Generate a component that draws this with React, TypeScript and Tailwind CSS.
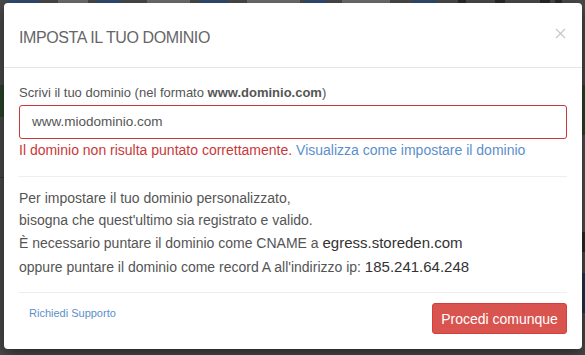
import React from "react";

const font = { fontFamily: '"Liberation Sans", Arial, Helvetica, sans-serif' };

function NavStrip() {
  const items: [number, number, string][] = [
    [7, 32, "bg-[#2f4d73]"],
    [19, 30, "bg-[#6f6f6f]"],
    [9, 23, "bg-[#2f4d73]"],
    [27, 43, "bg-[#6f6f6f]"],
    [10, 28, "bg-[#2f4d73]"],
    [19, 53, "bg-[#6f6f6f]"],
    [5, 21, "bg-[#2f4d73]"],
    [16, 48, "bg-[#6f6f6f]"],
    [22, 25, "bg-[#2f4d73]"],
    [21, 8, "bg-[#2a2a2a]"],
    [29, 10, "bg-[#2a2a2a]"],
    [35, 10, "bg-[#2a2a2a]"],
    [5, 7, "bg-[#2a2a2a]"],
  ];
  return (
    <div className="flex h-[3px] shrink-0">
      {items.map(([ml, w, c], i) => (
        <div key={i} className={`h-[3px] ${c}`} style={{ marginLeft: ml, width: w }} />
      ))}
    </div>
  );
}

export default function App() {
  return (
    <div className="relative w-[585px] h-[355px] overflow-hidden bg-[#4a4a4a]" style={font}>
      {/* page behind overlay */}
      <div className="flex flex-col h-full">
        <NavStrip />
        <div className="flex flex-1">
          <div className="w-[4px] flex flex-col">
            <div className="h-[82px]" />
            <div className="h-[32px] bg-[#2b4428]" />
            <div className="h-[60px]" />
            <div className="h-[1px] bg-[#3a3a3a]" />
          </div>
          <div className="flex-1" />
          <div className="w-[3px] flex flex-col">
            <div className="h-[82px]" />
            <div className="h-[50px] bg-[#2b4428]" />
            <div className="h-[97px] bg-[#505050]" />
            <div className="h-[20px] bg-[#2a2a2a]" />
            <div className="h-[21px]" />
            <div className="h-[40px] bg-[#23344a]" />
          </div>
        </div>
      </div>

      {/* modal */}
      <div className="absolute left-[4px] top-[3px] w-[578px] h-[346px] bg-white rounded-[4px] shadow-[0_5px_15px_rgba(0,0,0,0.5)] flex flex-col">
        <div className="h-[65px] border-b border-[#e5e5e5] flex items-center justify-between pl-[15px] pr-[16px]">
          <h4 className="mt-[5px] text-[16px] leading-[20px] text-[#666] tracking-[-0.4px]">IMPOSTA IL TUO DOMINIO</h4>
          <svg width="11" height="11" viewBox="0 0 11 11" className="mb-[4px]">
            <path d="M1 1 L10 10 M10 1 L1 10" stroke="#c8c8c8" strokeWidth="1.3" fill="none" />
          </svg>
        </div>

        <div className="px-[15px] pt-[16px] flex flex-col">
          <label className="text-[13px] leading-[18px] text-[#555]">
            Scrivi il tuo dominio (nel formato <b className="font-bold">www.dominio.com</b>)
          </label>
          <div className="mt-[3px] h-[34px] border border-[#c9393a] rounded-[3px] flex items-center pl-[12px] text-[13.5px] text-[#555]">
            www.miodominio.com
          </div>
          <div className="mt-[1px] text-[14px] leading-[20px]">
            <span className="text-[#c9393a]">Il dominio non risulta puntato correttamente.</span>{" "}
            <span className="text-[#5b8fcb]">Visualizza come impostare il dominio</span>
          </div>
          <div className="mt-[16px] border-t border-[#eeeeee]" />
          <div className="pt-[10px] text-[14px] text-[#555] flex flex-col">
            <div className="leading-[22px]">Per impostare il tuo dominio personalizzato,</div>
            <div className="leading-[22px]">bisogna che quest'ultimo sia registrato e valido.</div>
            <div className="leading-[24px]">
              È necessario puntare il dominio come CNAME a{" "}
              <span className="text-[15px] text-[#333]">egress.storeden.com</span>
            </div>
            <div className="leading-[24px]">
              oppure puntare il dominio come record A all'indirizzo ip:{" "}
              <span className="text-[15px] text-[#333]">185.241.64.248</span>
            </div>
          </div>
        </div>

        <div className="mx-[15px] mt-[13px] border-t border-[#eeeeee] pt-[10px] flex items-start justify-between">
          <span className="ml-[10px] mt-[3px] text-[11px] leading-[14px] text-[#5b8fcb]">Richiedi Supporto</span>
          <button className="h-[31px] w-[135px] rounded-[3px] bg-[#d9534f] border border-[#d43f3a] text-white text-[14px] leading-[20px]">
            Procedi comunque
          </button>
        </div>
      </div>
    </div>
  );
}
